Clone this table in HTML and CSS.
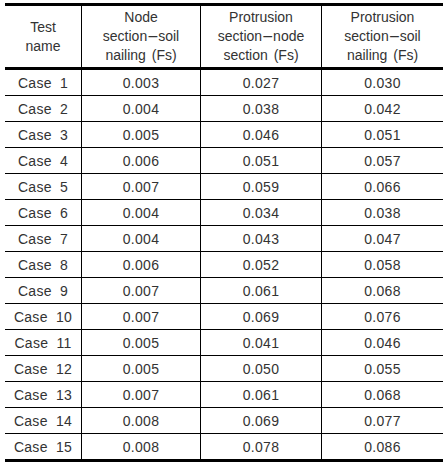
FILE: index.html
```html
<!DOCTYPE html>
<html lang="en">
<head>
    <meta charset="UTF-8">
    <meta name="viewport" content="width=device-width, initial-scale=1.0">
    <title>Safety factors</title>
    <link rel="stylesheet" href="styles.css">
</head>
<body>
    <table class="fs-table">
        <thead>
            <tr>
                <th class="col-name">Test<br>name</th>
                <th class="col-a">Node<br>section<span class="dash">−</span>soil<br>nailing (Fs)</th>
                <th class="col-b">Protrusion<br>section<span class="dash">−</span>node<br>section (Fs)</th>
                <th class="col-c">Protrusion<br>section<span class="dash">−</span>soil<br>nailing (Fs)</th>
            </tr>
        </thead>
        <tbody>
            <tr><td>Case 1</td><td>0.003</td><td>0.027</td><td>0.030</td></tr>
            <tr><td>Case 2</td><td>0.004</td><td>0.038</td><td>0.042</td></tr>
            <tr><td>Case 3</td><td>0.005</td><td>0.046</td><td>0.051</td></tr>
            <tr><td>Case 4</td><td>0.006</td><td>0.051</td><td>0.057</td></tr>
            <tr><td>Case 5</td><td>0.007</td><td>0.059</td><td>0.066</td></tr>
            <tr><td>Case 6</td><td>0.004</td><td>0.034</td><td>0.038</td></tr>
            <tr><td>Case 7</td><td>0.004</td><td>0.043</td><td>0.047</td></tr>
            <tr><td>Case 8</td><td>0.006</td><td>0.052</td><td>0.058</td></tr>
            <tr><td>Case 9</td><td>0.007</td><td>0.061</td><td>0.068</td></tr>
            <tr><td>Case 10</td><td>0.007</td><td>0.069</td><td>0.076</td></tr>
            <tr><td>Case 11</td><td>0.005</td><td>0.041</td><td>0.046</td></tr>
            <tr><td>Case 12</td><td>0.005</td><td>0.050</td><td>0.055</td></tr>
            <tr><td>Case 13</td><td>0.007</td><td>0.061</td><td>0.068</td></tr>
            <tr><td>Case 14</td><td>0.008</td><td>0.069</td><td>0.077</td></tr>
            <tr><td>Case 15</td><td>0.008</td><td>0.078</td><td>0.086</td></tr>
        </tbody>
    </table>
</body>
</html>
```

FILE: styles.css
```css
body {
    margin: 0;
    padding: 3px 0 0 5px;
    background-color: #fff;
    font-family: "Liberation Sans", Arial, sans-serif;
    font-size: 14px;
    color: #333;
}
.fs-table {
    border-collapse: collapse;
    width: 435px;
    table-layout: fixed;
    border-top: 3px solid #000;
    border-bottom: 3px solid #000;
}
.col-name {
    width: 76px;
}
.col-a {
    width: 118px;
}
.col-b {
    width: 120px;
}
.col-c {
    width: 121px;
}
th {
    font-weight: normal;
    height: 61px;
    padding: 0;
    line-height: 19px;
    text-align: center;
    border-bottom: 3px solid #000;
    word-spacing: 2px;
}
.dash {
    display: inline-block;
    width: 11px;
    text-align: center;
    font-family: "DejaVu Sans", sans-serif;
    letter-spacing: 0;
}
td {
    height: 25px;
    padding: 0;
    text-align: center;
    border-bottom: 1px solid #000;
    word-spacing: 4px;
    letter-spacing: 0.3px;
}
th + th,
td + td {
    border-left: 1px solid #000;
}
tbody tr:last-child td {
    border-bottom: 3px solid #000;
}
```
